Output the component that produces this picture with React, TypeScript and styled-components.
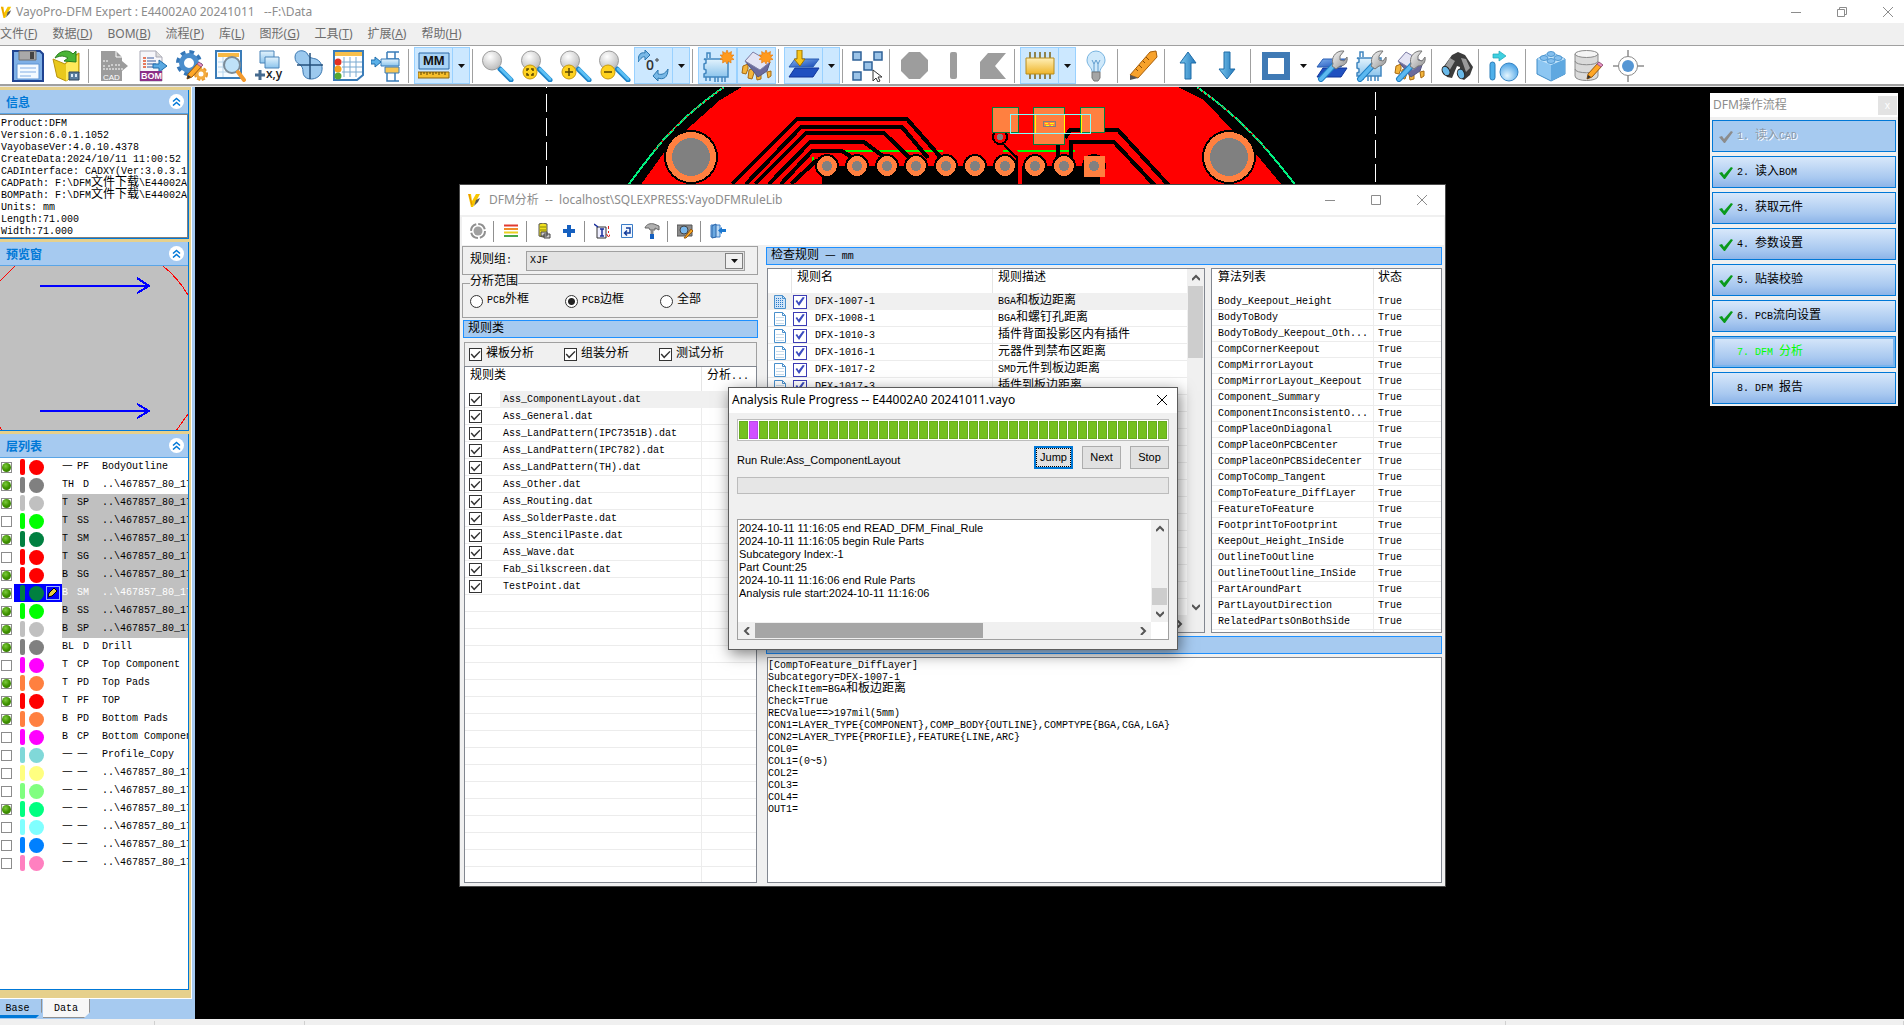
import React from "react";
import styled, { createGlobalStyle, css } from "styled-components";

const MONO = `"Liberation Mono", "Noto Sans CJK SC", monospace`;
const UI = `"Noto Sans", "Noto Sans CJK SC", sans-serif`;
const HAN = `"Noto Sans CJK SC", sans-serif`;

const Global = createGlobalStyle`
  *, *::before, *::after { box-sizing: border-box; }
  body { margin: 0; background: #000; font: 10px/12px ${MONO}; color: #000; overflow: hidden; }
  button, input, select, textarea { font: inherit; color: inherit; margin: 0; }
  svg { display: block; flex: none; }
`;

/* ---------- shared text helper: Chinese runs are set two sizes larger ---------- */
const Han = styled.span`
  font-family: ${HAN};
  font-size: 12px;
  line-height: 0;
`;
const T = ({ children }: { children: string }) => (
  <>
    {children.split(/([\u2014\u3000-\u9fff\uff00-\uffef]+)/).map((s, i) => (i % 2 ? <Han key={i}>{s}</Han> : s))}
  </>
);

/* ---------- application frame ---------- */
const App_ = styled.div`
  height: 100vh;
  display: flex;
  flex-direction: column;
  background: #f0f0f0;
`;
const TitleBar = styled.header`
  height: 23px;
  display: flex;
  align-items: center;
  background: #fff;
  font: 12px/22px ${UI};
  color: #8c8c8c;
  white-space: pre;
`;
const TitleLogo = styled.span`
  width: 16px;
`;
const WinButtons = styled.div<{ $gap: number; $end?: number }>`
  margin-left: auto;
  padding-right: ${(p) => p.$end ?? 0}px;
  display: flex;
  gap: ${(p) => p.$gap}px;
`;
const WinButton = styled.button`
  width: 14px;
  height: 14px;
  padding: 0;
  border: 0;
  background: none;
  color: inherit;
`;
const MenuBar = styled.nav`
  height: 22px;
  display: flex;
  gap: 15px;
  align-items: center;
`;
const MenuItem = styled.button`
  border: 0;
  padding: 0;
  background: none;
  font: 12px/18px ${UI};
  color: #6d6d6d;
`;
const ToolBar = styled.div`
  height: 42px;
  padding: 1px 0 0 8px;
  display: flex;
  align-items: flex-start;
  background: linear-gradient(#fff 0 38px, #a0a0a0 38px 40px, #e8e8e8 40px);
  border-top: 1px solid #a0a0a0;
`;
const ToolButton = styled.button<{ $on?: boolean; $narrow?: boolean }>`
  width: ${(p) => (p.$narrow ? 17 : 39)}px;
  height: 37px;
  padding: 0;
  display: flex;
  align-items: center;
  justify-content: center;
  border: 1px solid ${(p) => (p.$on ? "#99d1ff" : "transparent")};
  background: ${(p) => (p.$on ? "#cce8ff" : "none")};
  ${(p) => p.$narrow && p.$on && css`border-left: 0;`}
`;
const ToolSep = styled.span`
  width: 8px;
  height: 34px;
  margin-top: 2px;
  background: linear-gradient(90deg, transparent 2px, #a0a0a0 2px 3px, transparent 3px);
`;
const Main = styled.main`
  flex: 1;
  min-height: 0;
  display: flex;
`;
const StatusBar = styled.footer`
  height: 6px;
  display: flex;
  background: #f0f0f0;
`;
const StatusCell = styled.span<{ $w?: number }>`
  ${(p) => (p.$w ? `width: ${p.$w}px;` : "flex: 1;")}
  margin-top: 2px;
  border-right: 1px solid #d0d0d0;
`;

/* ---------- icons of the main tool bar ---------- */
const HiddenSvg = styled.svg`
  position: absolute;
`;
const Defs = () => (
  <HiddenSvg width="0" height="0" aria-hidden="true">
    <defs>
      <linearGradient id="blue" x1="0" y1="0" x2="0" y2="1"><stop offset="0" stopColor="#e3f3fd" /><stop offset="1" stopColor="#8cc4ec" /></linearGradient>
      <linearGradient id="deep" x1="0" y1="0" x2="1" y2="1"><stop offset="0" stopColor="#7fb2ee" /><stop offset="1" stopColor="#1446b4" /></linearGradient>
      <linearGradient id="arrow" x1="0" y1="0" x2="1" y2="0"><stop offset="0" stopColor="#7cc8ee" /><stop offset="1" stopColor="#2277bb" /></linearGradient>
      <linearGradient id="gold" x1="0" y1="0" x2="0" y2="1"><stop offset="0" stopColor="#fff0b8" /><stop offset="1" stopColor="#efb52a" /></linearGradient>
      <linearGradient id="steel" x1="0" y1="0" x2="1" y2="1"><stop offset="0" stopColor="#fafafa" /><stop offset="1" stopColor="#8d8d8d" /></linearGradient>
      <radialGradient id="lens" cx=".4" cy=".3" r=".8"><stop offset="0" stopColor="#fff" /><stop offset="1" stopColor="#b4b4b4" /></radialGradient>
      <radialGradient id="ball" cx=".4" cy=".7" r=".7"><stop offset="0" stopColor="#e4f6ff" /><stop offset="1" stopColor="#4aa3e6" /></radialGradient>
    </defs>
  </HiddenSvg>
);
const Ic = ({ children }: { children: React.ReactNode }) => (
  <svg width="32" height="32" viewBox="0 0 32 32" fill="none" aria-hidden="true">{children}</svg>
);
const Wrench = () => (
  <g>
    <path d="M5 29 L20 13" stroke="#1f7fc4" strokeWidth="6" strokeLinecap="round" />
    <path d="M5 29 L19 14" stroke="#5cb8f0" strokeWidth="4" strokeLinecap="round" />
    <path d="M17 14c-2-6 2-12 8-13h3l-4 5v4l4 1 3-4c1 5-2 9-7 9l-4 3-4-3z" fill="url(#steel)" stroke="#777" />
  </g>
);
const Sun = () => (
  <path d="M25 0l1.500 3.300L29.500 1.500 29 5l3 0-2.300 2.300L32 9.500l-3.200.3.300 3.200-2.800-1.700L25 14l-1.600-2.700L20.600 13l.2-3.200L18 9.400l2.300-2.200L18 5h3l-.4-3.500 2.900 1.800z" fill="#ff9a1e" stroke="#e87400" strokeWidth=".6" />
);
const Plates = () => (
  <g stroke="#10349a">
    <path d="M7 18h24l-6 9H1z" fill="#1f50c0" />
    <path d="M7 9h24l-6 8H1z" fill="url(#deep)" stroke="#2b5fb4" />
  </g>
);
const ChipBody = () => (
  <g stroke="#4287c0" strokeWidth="1.500">
    <path d="M5 7V2h3v5M4 26v4M13 26v5M20 26v5M8 26v4M16 26v5M23 26v5" />
    <path d="M2 8h24v18H2v-3l2-1v-3l-2-1v-5l2-1V9z" fill="url(#blue)" />
  </g>
);
const Chip3D = () => (
  <g>
    <path d="M2 16l5-2v5l-2 5-4-1zM8 20l5-2v5l-2 6-4-1zM15 24l5-1v6l-4 1z" fill="#f3b53c" stroke="#a86a10" />
    <path d="M4 11L12 3l17 9-3 9-9 6z" fill="#6a6a9c" stroke="#55557f" />
    <path d="M4 11L12 2l17 10-10 8z" fill="#e4e4f4" stroke="#8080a8" />
    <path d="M26 22l4-1v5l-3 2z" fill="#f3b53c" stroke="#a86a10" />
  </g>
);
const Glass = ({ badge }: { badge?: string }) => (
  <Ic>
    <path d="M18 19l11 11" stroke="#1c82c8" strokeWidth="5" strokeLinecap="round" />
    <path d="M19 19l10 10" stroke="#5cc0f5" strokeWidth="3" strokeLinecap="round" />
    <circle cx="10" cy="10.500" r="9.500" fill="url(#lens)" stroke="#9b9b9b" />
    {badge && <circle cx="9" cy="22" r="7" fill="#ffd21f" stroke="#c89a10" />}
    {badge && <path d={badge} stroke="#5a4500" strokeWidth="1.500" />}
  </Ic>
);
const Pencil = ({ x = 0, y = 0 }: { x?: number; y?: number }) => (
  <g transform={`translate(${x} ${y})`}>
    <path d="M1 17l1-5L12 1l4 3L6 15z" fill="#ffa726" stroke="#9a5a10" />
    <path d="M11 2l2-2 4 3-2 2z" fill="#e68fc0" stroke="#9a5a80" />
    <path d="M1 17l1-4 3 2z" fill="#333" />
  </g>
);

const icons: Record<string, React.ReactNode> = {
  save: <Ic><path d="M2 1h26l3 3v27H1V1z" fill="#7fb0e6" stroke="#1f4391" strokeWidth="2" /><path d="M7 1h17v9H7z" fill="#a9a9a9" stroke="#6f6f6f" /><path d="M18 2h4v7h-4z" fill="#444" /><path d="M5 14h22v15H5z" fill="#f4faff" stroke="#5f94d4" /><path d="M8 18h16M8 22h16M8 26h11" stroke="#a8c8ee" strokeWidth="1.500" /></Ic>,
  open: <Ic><path d="M2 9l12 5 4-5 10-6v20l-13 8L6 27z" fill="#e9c81c" stroke="#b8930c" /><path d="M15 14l12-9v18l-12 8z" fill="#ffe95a" /><path d="M4 8C8 0 18-1 22 4l3-3v11l-12-1 4-3c-5-3-9-2-13 0z" fill="#4ab436" stroke="#2a7d1c" /><path d="M18 22h10v8H18z" fill="#5b7f9f" stroke="#2d455c" /><path d="M20 24h2v3h-2zM24 24h2v3h-2z" fill="#dcebf8" /></Ic>,
  cad: <Ic><path d="M3 1h15l6 6v4l6 5-6 5v10H3z" fill="#9c9c9c" /><path d="M18 1v6h6" stroke="#fff" /><path d="M5 16h3M10 16h2M14 14v3M17 15h5M5 19h20M5 11h6" stroke="#fff" strokeDasharray="2 1" /><text x="5" y="30" fontSize="8" fontFamily="Liberation Sans" fill="#fff">CAD</text></Ic>,
  bom: <Ic><path d="M3 1h16l6 6v24H3z" fill="#f6f6fa" stroke="#a9a9b5" /><path d="M19 1v6h6" stroke="#a9a9b5" fill="#ddd" /><path d="M6 8h3M6 11h3M6 14h3M6 17h3" stroke="#e0522c" strokeWidth="1.500" /><path d="M10 8h7M10 11h9M10 14h9M10 17h6" stroke="#3b5a9c" /><path d="M16 14h6v-4l8 6-8 6v-4h-6z" fill="#5aa9e2" stroke="#1e6dab" /><path d="M3 21h22v10H3z" fill="#8c2f87" /><text x="4" y="29" fontSize="9" fontWeight="700" fontFamily="Liberation Sans" fill="#fff">BOM</text></Ic>,
  gears: <Ic><circle cx="13" cy="13" r="10.500" stroke="#3577b8" strokeWidth="5" strokeDasharray="4.500 3.750" /><circle cx="13" cy="13" r="7.500" stroke="#4a8dcc" strokeWidth="5" /><circle cx="25" cy="24" r="5.500" stroke="#e8962a" strokeWidth="3" strokeDasharray="3 1.600" /><circle cx="25" cy="24" r="4" stroke="#f4ab3e" strokeWidth="3" /><Pencil x={10} y={12} /></Ic>,
  find: <Ic><path d="M1 1h25v27H1z" fill="#f5fbff" stroke="#3a7cb8" strokeWidth="2" /><path d="M3 3h21v4H3z" fill="#f7b944" /><path d="M3 12h21M3 17h21M3 22h21M8 7v20" stroke="#b7d5ec" /><circle cx="17" cy="15" r="8" fill="#bfe2f8" stroke="#7b8c99" strokeWidth="2" /><path d="M23 22l6 8" stroke="#f39a2d" strokeWidth="4" strokeLinecap="round" /></Ic>,
  xy: <Ic><path d="M6 1h14v12H6z" fill="url(#blue)" stroke="#4a84b8" /><path d="M11 7h14v11H11z" fill="url(#blue)" stroke="#4a84b8" /><path d="M6 20v10M1 25h10" stroke="#456a8e" strokeWidth="3" /><text x="12" y="28" fontSize="12" fontWeight="600" fontFamily="Open Sans" fill="#222">x,y</text></Ic>,
  shape: <Ic><path d="M2 7c0-8 11-8 13-2 1 3 4 3 8 4 7 3 8 12 3 17s-16 4-16-4c0-4-1-6-4-8-2-1-4-3-4-7z" fill="#9cc9ee" stroke="#3c78b0" /><path d="M17 3v26M4 15h26" stroke="#24507c" strokeWidth="1.500" /></Ic>,
  sheet: <Ic><path d="M2 1h29v24l-6 5H2z" fill="#fff" stroke="#3a7cb8" strokeWidth="2" /><path d="M3 2h27v4H3z" fill="#f7c04c" /><path d="M10 12h20M10 17h20M10 22h20M12 7v20M18 7v20M24 7v20" stroke="#7aaad0" /><circle cx="6" cy="12" r="3.500" fill="#e33022" /><circle cx="6" cy="19" r="3.500" fill="#f5a11c" /><circle cx="6" cy="26" r="3.500" fill="#55a832" /></Ic>,
  insert: <Ic><path d="M16 2h12M16 2v7h12M24 2v7M16 23v8h12M24 23v8" stroke="#3a7cb8" strokeWidth="1.500" /><path d="M10 9h18v7H10z" fill="url(#blue)" stroke="#3a7cb8" /><path d="M14 17h14v6H14z" fill="#f9c653" stroke="#3a7cb8" /><path d="M0 10h4V7l6 5-6 5v-3H0z" fill="#5ab0e8" stroke="#1e6dab" /></Ic>,
  mm: <Ic><path d="M1 3h30v16H1z" fill="#a9d3f5" stroke="#2d6aa8" /><text x="5" y="15" fontSize="13" fontWeight="700" fontFamily="Liberation Sans" fill="#111">MM</text><path d="M0 22h31v6H0z" fill="#f6bf2c" stroke="#8a6410" /><path d="M3 22v3M6 22v2M9 22v3M12 22v2M15 22v3M18 22v2M21 22v3M24 22v2M27 22v3" stroke="#5a4300" /></Ic>,
  zoom: <Glass />,
  zoomFit: <Glass badge="M6 21v-2h2M10 19h2v2M12 23v2h-2M8 25H6v-2" />,
  zoomIn: <Glass badge="M9 18v8M5 22h8" />,
  zoomOut: <Glass badge="M5 22h8" />,
  rotate: <Ic><path d="M0 12C0 4 3 2 7 3V0l5 5-5 5V7C5 6 3 8 0 12z" fill="#78b8e6" stroke="#2a76ae" /><path d="M30 19c0 9-5 11-10 9v3l-5-5 5-6v4c4 1 7 0 10-5z" fill="#78b8e6" stroke="#2a76ae" /><text x="8" y="20" fontSize="14" fontWeight="600" fontFamily="Open Sans" fill="#333">0</text><circle cx="19" cy="10" r="1.200" stroke="#333" /></Ic>,
  chipNew: <Ic><g transform="translate(0 1)"><ChipBody /></g><Sun /></Ic>,
  chip3dNew: <Ic><Chip3D /><Sun /></Ic>,
  layer: <Ic><Plates /><path d="M9 0h5v9h3l-5 7-6-7h3z" fill="#f8c61a" stroke="#9c7400" /></Ic>,
  select: <Ic><g fill="#9cc4e8" stroke="#2f6298" strokeWidth="1.500"><path d="M1 2h8v8H1zM22 2h8v8h-8zM12 12h8v8h-8zM1 22h8v8H1z" /></g><path d="M21 20v11l3-3 2 4 2-1-2-4h4z" fill="#fff" stroke="#333" /></Ic>,
  octagon: <svg width="27" height="27" viewBox="0 0 27 27"><path d="M8 0h11l8 8v11l-8 8H8l-8-8V8z" fill="#9d9d9d" /></svg>,
  pin: <svg width="8" height="27" viewBox="0 0 8 27"><rect width="7" height="27" rx="2" fill="#9d9d9d" /></svg>,
  flag: <svg width="26" height="26" viewBox="0 0 26 26"><path d="M8 0h18L15 13l11 13H0V9z" fill="#9d9d9d" /></svg>,
  chipGold: <Ic><path d="M6 2v27M11 2v27M16 2v27M21 2v27M26 2v27" stroke="#7a6214" strokeWidth="1.500" /><path d="M2 8h28v16H2z" fill="url(#gold)" stroke="#b88c1c" /></Ic>,
  bulb: <Ic><path d="M12 22c0-5-5-6-5-12a9 9 0 0118 0c0 6-5 7-5 12z" fill="#cfe9fb" stroke="#78b4e0" /><path d="M12 10l2 4 2-4 2 4 2-4M14 14v8M18 14v8" stroke="#5f9cce" /><path d="M12 22h8v6l-2 3h-4l-2-3z" fill="#a5a5a5" stroke="#777" /></Ic>,
  ruler: <Ic><path d="M3 25L23 2l6-1 1 6L11 28z" fill="#f7a22c" stroke="#a85e08" /><path d="M3 25l8 3-8 2z" fill="#555" /><path d="M9 19l2 2M12 15l3 3M16 11l2 2M19 7l3 3" stroke="#8a4c05" /></Ic>,
  up: <Ic><path d="M11 29V13H6l8-11 8 11h-5v16z" fill="url(#arrow)" stroke="#1f6ca8" /></Ic>,
  down: <Ic><path d="M11 2v17H6l8 10 8-10h-5V2z" fill="url(#arrow)" stroke="#1f6ca8" /></Ic>,
  square: <svg width="28" height="28" viewBox="0 0 28 28"><rect x="3" y="3" width="22" height="22" fill="none" stroke="#3f7ab5" strokeWidth="6" /></svg>,
  layerSet: <Ic><Plates /><Wrench /></Ic>,
  chipSet: <Ic><ChipBody /><Wrench /></Ic>,
  chip3dSet: <Ic><Chip3D /><Wrench /></Ic>,
  binoculars: <Ic><path d="M1 19l10-14 6-3 7 3 8 12-3 8-6 5-5-3 1-10-3-1-5 12-5-1z" fill="#3c3c3c" /><path d="M9 8l5 3-7 12-4-5zM20 8l5 1 4 9-4 4z" fill="#9a9a9a" /><ellipse cx="5" cy="21" rx="3.500" ry="5" transform="rotate(-30 5 21)" fill="#68b8e8" stroke="#222" /><ellipse cx="20" cy="24" rx="3.500" ry="5" transform="rotate(-20 20 24)" fill="#68b8e8" stroke="#222" /></Ic>,
  convert: <Ic><rect x="2" y="12" width="5" height="18" rx="2.500" fill="#4fb0ea" stroke="#2a7cb8" /><circle cx="21" cy="22" r="9" fill="url(#ball)" stroke="#3484c4" /><path d="M5 4h6V1l7 5-7 5V8H5z" fill="#3fd0e0" stroke="#1ea3b4" strokeWidth=".7" /></Ic>,
  brick: <Ic><path d="M16 2l14 7v15l-14 7L2 24V9z" fill="#8cc6f2" stroke="#3f8cc8" /><path d="M16 15l14-6v15l-14 7z" fill="#5fa8e0" /><path d="M2 9l14-7 14 7-14 6z" fill="#c4e4fa" /><g fill="#84bfee" stroke="#3f8cc8" strokeWidth=".8"><ellipse cx="16" cy="4" rx="4" ry="2.500" /><ellipse cx="9" cy="8" rx="4" ry="2.500" /><ellipse cx="23" cy="8" rx="4" ry="2.500" /><ellipse cx="16" cy="11" rx="4" ry="2.500" /></g></Ic>,
  database: <Ic><path d="M1 4v22c0 6 23 6 23 0V4z" fill="#dadada" stroke="#8a8a8a" /><ellipse cx="12.500" cy="4" rx="11.500" ry="3.500" fill="#f4f4f4" stroke="#8a8a8a" /><path d="M1 11c0 5 23 5 23 0M1 19c0 5 23 5 23 0" stroke="#8a8a8a" /><Pencil x={12} y={12} /></Ic>,
  target: <Ic><path d="M15 0v32M0 16h31" stroke="#555" /><circle cx="15" cy="16" r="9.500" fill="#fff" stroke="#8a8a8a" /><circle cx="15" cy="16" r="6" fill="#5596d4" /></Ic>,
};
const Caret = () => <svg width="7" height="4" viewBox="0 0 7 4"><path d="M0 0h7L3.500 4z" fill="#111" /></svg>;

/* a trailing "*" marks a pressed button, "v" a drop-down part, "|" a separator */
const toolItems =
  "save open | cad bom gears find xy shape sheet insert | mm* v* | zoom zoomFit zoomIn zoomOut rotate* v* | chipNew* chip3dNew* | layer* v* | select | octagon pin flag | chipGold* v* bulb | ruler | up down | square v layerSet chipSet chip3dSet | binoculars | convert | brick database target".split(" ");

const menus: [string, string][] = [["文件", "F"], ["数据", "D"], ["BOM", "B"], ["流程", "P"], ["库", "L"], ["图形", "G"], ["工具", "T"], ["扩展", "A"], ["帮助", "H"]];

const Logo = ({ size = 14 }: { size?: number }) => (
  <svg width={size} height={size} viewBox="0 0 14 14" aria-hidden="true">
    <path d="M1 1l3 0 1 7 4-7 4 0-7 13H4z" fill="#f7c600" />
    <path d="M9 7l4-2-2 4-4 4z" fill="#555" />
    <path d="M2 1l3 11" stroke="#e88a00" />
  </svg>
);
const MinIcon = () => <svg width="14" height="14" viewBox="0 0 14 14"><path d="M2 7.500h10" stroke="currentColor" /></svg>;
const MaxIcon = () => <svg width="14" height="14" viewBox="0 0 14 14"><path d="M2.500 2.500h9v9h-9z" stroke="currentColor" fill="none" /></svg>;
const RestoreIcon = () => <svg width="14" height="14" viewBox="0 0 14 14"><path d="M2.500 4.500h7v7h-7zM4.500 4.500v-2h7v7h-2" stroke="currentColor" fill="none" /></svg>;
const CloseIcon = () => <svg width="14" height="14" viewBox="0 0 14 14"><path d="M2 2l10 10M12 2L2 12" stroke="currentColor" /></svg>;

/* ---------- side bar ---------- */
const SideBar = styled.aside`
  width: 195px;
  display: flex;
  flex-direction: column;
  background: #a6caf0;
`;
const SideFrame = styled.div`
  flex: 1;
  min-height: 0;
  width: 192px;
  padding: 3px 2px 8px 0;
  display: flex;
  flex-direction: column;
  gap: 3px;
  background: #e6d08c;
  border-right: 1px solid #fff;
  border-bottom: 1px solid #fff;
`;
const Panel = styled.section<{ $grow?: boolean }>`
  display: flex;
  flex-direction: column;
  min-height: 0;
  ${(p) => p.$grow && "flex: 1;"}
  border-right: 1px solid #0078d7;
  border-bottom: 1px solid #0078d7;
`;
const PanelHead = styled.div`
  height: 24px;
  padding: 0 4px 0 6px;
  display: flex;
  align-items: center;
  justify-content: space-between;
  background: #a6caf0;
  border-bottom: 1px solid #5aa5e6;
  font: 700 12px/22px ${HAN};
  color: #0078d7;
`;
const Collapse = styled.button`
  width: 15px;
  height: 15px;
  padding: 0;
  border: 0;
  border-radius: 50%;
  background: #fff;
  display: grid;
  place-items: center;
`;
const Info = styled.pre`
  margin: 0;
  height: 124px;
  padding: 3px 2px 0 1px;
  overflow: hidden;
  background: #fff;
  border: 1px solid #808080;
  border-left: 0;
  font: 10px/12px ${MONO};
`;
const InfoLine = styled.div`
  height: 12px;
`;
const Preview = styled.div`
  height: 164px;
  overflow: hidden;
  background: #c0c0c0;
`;
const Layers = styled.ul`
  margin: 0;
  padding: 0;
  flex: 1;
  overflow: hidden;
  list-style: none;
  background: #fff;
`;
const LayerRow = styled.li`
  height: 18px;
  display: flex;
  align-items: center;
`;
const LayerSwatch = styled.span<{ $on?: boolean }>`
  width: 48px;
  height: 18px;
  padding-left: 6px;
  margin-left: 2px;
  display: flex;
  align-items: center;
  gap: 4px;
  background: ${(p) => (p.$on ? "#00f" : "none")};
`;
const Bar = styled.span<{ $c: string }>`
  width: 5px;
  height: 16px;
  border-radius: 2px;
  background: ${(p) => p.$c};
`;
const Dot = styled.span<{ $c: string }>`
  width: 15px;
  height: 15px;
  border-radius: 50%;
  background: ${(p) => p.$c};
`;
const PenBox = styled.span`
  width: 14px;
  height: 14px;
  margin-left: -2px;
  border: 1px solid #9ab4ff;
  display: grid;
  place-items: center;
`;
const LayerText = styled.label<{ $tone?: string }>`
  flex: 1;
  height: 18px;
  min-width: 0;
  overflow: hidden;
  display: grid;
  grid-template-columns: 15px 25px 1fr;
  white-space: pre;
  line-height: 17px;
  background: ${(p) => (p.$tone ? "#c0c0c0" : "none")};
  color: ${(p) => (p.$tone === "sel" ? "#fff" : "#000")};
`;
const VisBox = styled.input`
  appearance: none;
  width: 11px;
  height: 11px;
  margin-left: 1px;
  background: #fff;
  border: 1px solid #8c8c8c;
  &:checked::before {
    content: "";
    display: block;
    width: 9px;
    height: 9px;
    border-radius: 50%;
    background: radial-gradient(circle at 40% 35%, #7ccb3c, #3f9200 50%, #2c6b00);
  }
`;
const Tabs = styled.div`
  height: 20px;
  display: flex;
`;
const Tab = styled.button<{ $on?: boolean }>`
  width: ${(p) => (p.$on ? 47 : 42)}px;
  height: 19px;
  padding: ${(p) => (p.$on ? "2px 0 0" : "4px 6px 0 0")};
  margin-right: 1px;
  border: 0;
  border-right: 1px solid #909090;
  border-bottom: ${(p) => (p.$on ? "1px solid #909090" : "3px solid #0078d7")};
  background: ${(p) => (p.$on ? "#f7f7f7" : "#a6caf0")};
  clip-path: polygon(0 0, 100% 0, 100% 70%, calc(100% - 6px) 100%, 0 100%);
  font: 10px/12px ${MONO};
`;

const info = ["Product:DFM", "Version:6.0.1.1052", "VayobaseVer:4.0.10.4378", "CreateData:2024/10/11 11:00:52", "CADInterface: CADXY(Ver:3.0.3.11", "CADPath: F:\\DFM文件下载\\E44002A0", "BOMPath: F:\\DFM文件下载\\E44002A0", "Units: mm", "Length:71.000", "Width:71.000"];

const PATH = "..\\467857_80_17";
const layers: [number, string, string, string, string, string?][] = [
  [1, "#ff0000", "—", "PF", "BodyOutline"],
  [1, "#808080", "TH", " D", PATH],
  [1, "#c0c0c0", "T", "SP", PATH, "g"],
  [0, "#00ff00", "T", "SS", PATH, "g"],
  [1, "#008040", "T", "SM", PATH, "g"],
  [0, "#ff0000", "T", "SG", PATH, "g"],
  [1, "#ff0000", "B", "SG", PATH, "g"],
  [1, "#008040", "B", "SM", PATH, "sel"],
  [1, "#00ff00", "B", "SS", PATH, "g"],
  [1, "#c0c0c0", "B", "SP", PATH, "g"],
  [1, "#808080", "BL", " D", "Drill"],
  [0, "#ff00ff", "T", "CP", "Top Component"],
  [1, "#ff8040", "T", "PD", "Top Pads"],
  [1, "#ff0000", "T", "PF", "TOP"],
  [1, "#ff8040", "B", "PD", "Bottom Pads"],
  [0, "#ff00ff", "B", "CP", "Bottom Component"],
  [0, "#80d8d8", "—", "—", "Profile_Copy"],
  [0, "#ffff80", "—", "—", PATH],
  [0, "#80ff80", "—", "—", PATH],
  [1, "#00ff80", "—", "—", PATH],
  [0, "#80ffff", "—", "—", PATH],
  [0, "#0080ff", "—", "—", PATH],
  [0, "#ff80c0", "—", "—", PATH],
];

const Head = ({ children }: { children: string }) => (
  <PanelHead>
    {children}
    <Collapse aria-label={`收起${children}`}>
      <svg width="9" height="9" viewBox="0 0 9 9" fill="none" stroke="#0078d7" strokeWidth="1.500"><path d="M1 4.500l3.500-3 3.500 3M1 8.500l3.500-3 3.500 3" /></svg>
    </Collapse>
  </PanelHead>
);

/* ---------- board canvas ---------- */
const Canvas = styled.div`
  flex: 1;
  position: relative;
  overflow: hidden;
  background: #000;
`;
const BoardSvg = styled.svg`
  position: absolute;
  left: 345px;
  top: 0;
`;
const padX = [827, 857, 887, 916, 946, 975, 1005, 1035, 1064];
const Board = () => (
  <BoardSvg width="860" height="110" viewBox="540 87 860 110" fill="none" shapeRendering="crispEdges">
    <path d="M742 87H1178L1204 100L1234 132L1256 154L1286 190V197H632L663 154L684 132L720 100Z" fill="#f00" />
    <path d="M546.500 94V197" stroke="#fff" strokeDasharray="18 6" />
    <path d="M1375.500 92V197" stroke="#fff" strokeDasharray="18 6" />
    <path d="M546.500 87v1" stroke="#fff" />
    <path d="M724 87Q680 118 655 150T620 197M1197 87Q1240 118 1267 150T1304 197" stroke="#00f080" strokeWidth="2" />
    <path d="M723 88Q679 119 654 151M1198 88Q1241 119 1268 151" stroke="#d03020" strokeDasharray="2 3" />
    {[691, 1229].map((x) => (
      <g key={x}>
        <circle cx={x} cy="157" r="27" fill="#000" />
        <circle cx={x} cy="157" r="25" fill="#ff8040" />
        <circle cx={x} cy="157" r="19" fill="#808080" />
      </g>
    ))}
    <path d="M842 151h101M1003 151h72M812.500 157v8" stroke="#0f0" strokeWidth="2" />
    <g stroke="#000" strokeWidth="4">
      <path d="M732 184L797 119H907L943 160" />
      <path d="M746 184L801 127H902L928 158" />
      <path d="M755 184L806 133H884L914 162" />
      <path d="M769 184L810 142H864L888 160" />
      <path d="M781 184L812 151H842L856 160" />
      <path d="M791 184L817 160" />
      <path d="M1058 145v14M1071 160V142H1114L1159 190" />
      <path d="M1065 138L1070 130H1118L1173 190" />
      <path d="M1003 142L1018 158V184" />
    </g>
    <path d="M822 166H1100V197H822Z" fill="#000" />
    {[...padX, 1094].map((x) => <circle key={x} cx={x} cy="166" r="12" fill="#000" />)}
    {padX.map((x) => (
      <g key={x}>
        <circle cx={x} cy="166" r="10" fill="#ff8040" />
        <circle cx={x} cy="166" r="5" fill="#808080" />
      </g>
    ))}
    <path d="M1084 156h21v21h-21z" fill="#ff8040" />
    <circle cx="1094" cy="166" r="5" fill="#808080" />
    <path d="M1003 140L1020 156V197" stroke="#f00" strokeWidth="4" />
    <circle cx="1000" cy="137" r="8" fill="#000" />
    <circle cx="1000" cy="137" r="6" fill="#f00" />
    <circle cx="1000" cy="137" r="3" fill="#808080" />
    <g fill="#ff8040" stroke="#008040">
      <path d="M992.500 107.500h26v25h-26zM1033.500 107.500h31v37h-31zM1080.500 107.500h24v25h-24z" />
    </g>
    <path d="M1035.500 114v19M1064.500 114v19M1081.500 114v19" stroke="#ff0" />
    <path d="M1010.500 114.500h80v19h-80z" stroke="#80ffff" />
    <path d="M1043.500 121.500h12v5h-12z" stroke="#808080" />
    <path d="M1045 123h3M1050 123h4M1046 125h3M1051 125h2" stroke="#ff0" />
  </BoardSvg>
);

/* ---------- process palette ---------- */
const Palette = styled.section`
  position: absolute;
  right: 6px;
  top: 6px;
  width: 188px;
  padding: 0 2px 2px;
  background: #f0f0f0;
`;
const PaletteHead = styled.div`
  height: 24px;
  margin: 0 -2px 3px;
  padding: 0 1px 0 3px;
  display: flex;
  align-items: center;
  justify-content: space-between;
  background: #fff;
  font: 12px/22px ${UI};
  color: #8c8c8c;
`;
const PaletteClose = styled.button`
  width: 19px;
  height: 19px;
  padding: 0;
  border: 0;
  background: #e3e3e3;
  color: #fff;
  font: 10px/16px ${UI};
`;
const Steps = styled.div`
  display: flex;
  flex-direction: column;
  gap: 4px;
`;
const Step = styled.button<{ $state?: string }>`
  height: 32px;
  padding: 2px 0 0 6px;
  display: flex;
  align-items: center;
  gap: 4px;
  white-space: pre;
  border: 1px solid #0078d7;
  background: linear-gradient(#d8e8fa, #a8c8f0 70%, #8cb4e8);
  ${(p) => p.$state === "off" && css`background: #a6caf0; color: #8c98a8; text-shadow: 1px 1px #fff;`}
  ${(p) => p.$state === "on" && css`color: #0f0; box-shadow: inset 0 0 0 2px #78b4ee;`}
`;
const StepMark = styled.span`
  width: 14px;
`;
const steps: [string, string?][] = [["1. 读入CAD", "off"], ["2. 读入BOM"], ["3. 获取元件"], ["4. 参数设置"], ["5. 贴装校验"], ["6. PCB流向设置"], ["7. DFM 分析", "on"], ["8. DFM 报告"]];

/* ---------- rule dialog ---------- */
const Dialog = styled.section`
  position: absolute;
  left: 264px;
  top: 97px;
  width: 987px;
  height: 703px;
  display: flex;
  flex-direction: column;
  background: #f0f0f0;
  border: 1px solid #4a4a4a;
`;
const DialogTitle = styled.div`
  height: 30px;
  padding: 0 16px 0 7px;
  display: flex;
  align-items: center;
  gap: 8px;
  background: #fff;
  font: 12px/28px ${UI};
  color: #8c8c8c;
  white-space: pre;
`;
const DialogTools = styled.div`
  height: 28px;
  margin: 2px 1px 1px 2px;
  padding-left: 3px;
  display: flex;
  align-items: center;
  background: #fff;
`;
const SmallButton = styled.button`
  width: 25px;
  height: 24px;
  padding: 0;
  border: 0;
  background: none;
  display: grid;
  place-items: center;
`;
const SmallSep = styled.span`
  width: 8px;
  height: 21px;
  background: linear-gradient(90deg, transparent 3px, #909090 3px 4px, transparent 4px);
`;
const DialogBody = styled.div`
  flex: 1;
  min-height: 0;
  padding: 0 3px 3px 2px;
  display: flex;
  gap: 8px;
`;
const LeftCol = styled.div`
  width: 296px;
  display: flex;
  flex-direction: column;
`;
const RightCol = styled.div`
  flex: 1;
  min-width: 0;
  padding-top: 1px;
  display: flex;
  flex-direction: column;
  gap: 3px;
`;
const GroupRow = styled.div`
  height: 29px;
  padding: 0 12px 0 7px;
  display: flex;
  align-items: center;
  border: 1px solid #a0a0a0;
`;
const GroupLabel = styled.label`
  width: 56px;
  line-height: 14px;
`;
const Combo = styled.div`
  position: relative;
  flex: 1;
  display: flex;
`;
const ComboSelect = styled.select`
  appearance: none;
  flex: 1;
  height: 20px;
  padding: 0 3px;
  border: 1px solid #a0a0a0;
  border-radius: 0;
  background: #e3e3e3;
`;
const ComboArrow = styled.span`
  position: absolute;
  right: 2px;
  top: 2px;
  width: 18px;
  height: 16px;
  border: 1px solid #808080;
  background: #f0f0f0;
  display: grid;
  place-items: center;
  pointer-events: none;
`;
const Scope = styled.fieldset`
  height: 43px;
  margin: 0;
  padding: 3px 0 0 7px;
  min-width: 0;
  display: flex;
  border: 1px solid #a0a0a0;
`;
const Legend = styled.legend`
  padding: 0;
  line-height: 16px;
`;
const Option = styled.label`
  width: 95px;
  line-height: 14px;
  display: flex;
  align-items: center;
  gap: 4px;
`;
const Radio = styled.input`
  appearance: none;
  width: 13px;
  height: 13px;
  border: 1px solid #333;
  border-radius: 50%;
  background: #fff;
  &:checked { background: radial-gradient(circle, #222 0 3px, #fff 4px); }
`;
const Check = styled.input<{ $blue?: boolean }>`
  appearance: none;
  flex: none;
  display: block;
  width: ${(p) => (p.$blue ? 14 : 13)}px;
  height: ${(p) => (p.$blue ? 14 : 13)}px;
  border: 1px solid ${(p) => (p.$blue ? "#3c3cb4" : "#333")};
  background: #fff;
  &:checked::before {
    content: "";
    display: block;
    width: 11px;
    height: 11px;
    background: ${(p) => (p.$blue ? "#3c4cc0" : "#333")};
    clip-path: ${(p) => (p.$blue ? "polygon(14% 50%, 28% 42%, 42% 64%, 80% 14%, 98% 18%, 46% 96%)" : "polygon(6% 50%, 16% 42%, 38% 66%, 86% 18%, 96% 26%, 38% 86%)")};
  }
`;
const Band = styled.div<{ $left?: boolean }>`
  height: 18px;
  padding: 0 4px;
  line-height: 17px;
  border: 1px solid #1e90ff;
  background: #a6caf0;
  ${(p) => p.$left && "margin: 2px 0 4px 1px;"}
`;
const CheckRow = styled.div`
  height: 24px;
  margin: 0 1px 0 2px;
  padding-left: 4px;
  display: flex;
  align-items: center;
  border: 1px solid #a0a0a0;
  border-bottom: 0;
`;
const Grid = styled.div<{ $row: number; $head: number; $split: number }>`
  overflow: hidden;
  border: 1px solid #828790;
  background:
    linear-gradient(#fff, #fff) 0 0 / 100% ${(p) => p.$head}px no-repeat,
    linear-gradient(90deg, transparent ${(p) => p.$split}px, #ececec ${(p) => p.$split}px ${(p) => p.$split + 1}px, transparent ${(p) => p.$split + 1}px),
    repeating-linear-gradient(#fff 0 ${(p) => p.$row - 1}px, #ececec ${(p) => p.$row - 1}px ${(p) => p.$row}px) 0 ${(p) => p.$head}px;
`;
const ClassGrid = styled(Grid)`
  flex: 1;
  margin: 0 1px 0 2px;
`;
const Table = styled.table<{ $row: number; $head: number }>`
  width: 100%;
  table-layout: fixed;
  border-collapse: separate;
  border-spacing: 0;
  white-space: nowrap;
  th, td { padding: 0; text-align: left; font-weight: 400; overflow: hidden; text-overflow: clip; }
  th { height: ${(p) => p.$head}px; line-height: 20px; vertical-align: top; }
  th:not(:last-child) { border-right: 1px solid #e5e5e5; }
  td { height: ${(p) => p.$row}px; line-height: ${(p) => p.$row}px; }
`;
const Row = styled.tr<{ $on?: boolean }>`
  td { ${(p) => p.$on && "background: #f0f0f0;"} }
`;
const TintCell = styled.td<{ $on?: boolean }>`
  background: ${(p) => (p.$on ? "#f0f0f0" : "none")};
`;
const ClassCell = styled.div`
  height: 16px;
  padding-left: 4px;
  display: flex;
  align-items: center;
  gap: 18px;
`;
const ClassName = styled.label<{ $on?: boolean }>`
  flex: 1;
  padding-left: 3px;
  background: ${(p) => (p.$on ? "#f0f0f0" : "none")};
`;
const RuleCell = styled.div`
  height: 16px;
  padding-left: 1px;
  display: flex;
  align-items: center;
  gap: 8px;
`;
const Pad = styled.div<{ $l: number }>`
  padding-left: ${(p) => p.$l}px;
`;
const Lists = styled.div`
  height: 365px;
  padding-left: 1px;
  display: flex;
  gap: 6px;
`;
const RuleBox = styled(Grid)`
  width: 438px;
  display: grid;
  grid-template-columns: 1fr 17px;
  grid-template-rows: 1fr 17px;
`;
const Clip = styled.div`
  min-width: 0;
  min-height: 0;
  overflow: hidden;
`;
const AlgBox = styled(Grid)`
  flex: 1;
`;
const VScroll = styled.div`
  display: flex;
  flex-direction: column;
  align-items: center;
  background: #f0f0f0;
  color: #555;
`;
const HScroll = styled.div`
  display: flex;
  align-items: center;
  background: #f0f0f0;
  color: #555;
`;
const Thumb = styled.span<{ $w?: number; $h?: number; $dark?: boolean }>`
  width: ${(p) => p.$w ?? 15}px;
  height: ${(p) => p.$h ?? 15}px;
  background: ${(p) => (p.$dark ? "#a6a6a6" : "#cdcdcd")};
`;
const Grow = styled.span`
  flex: 1;
`;
const ArrowBox = styled.span`
  width: 17px;
  height: 17px;
  display: grid;
  place-items: center;
`;
const arrows = { up: "M0 6l4-4 4 4", down: "M0 2l4 4 4-4", left: "M6 0L2 4l4 4", right: "M2 0l4 4-4 4" };
const Arrow = ({ d }: { d: keyof typeof arrows }) => (
  <ArrowBox><svg width="8" height="8" viewBox="0 0 8 8" fill="none" stroke="currentColor" strokeWidth="2"><path d={arrows[d]} /></svg></ArrowBox>
);
const RuleText = styled.pre`
  flex: 1;
  margin: 0 0 0 1px;
  padding: 2px 0 0;
  overflow: hidden;
  border: 1px solid #828790;
  background: #fff;
  font: 10px/12px ${MONO};
`;
const Center = styled.div`
  display: flex;
  align-items: center;
  padding-left: 6px;
`;

const classes = ["Ass_ComponentLayout.dat", "Ass_General.dat", "Ass_LandPattern(IPC7351B).dat", "Ass_LandPattern(IPC782).dat", "Ass_LandPattern(TH).dat", "Ass_Other.dat", "Ass_Routing.dat", "Ass_SolderPaste.dat", "Ass_StencilPaste.dat", "Ass_Wave.dat", "Fab_Silkscreen.dat", "TestPoint.dat"];
const rules = [["DFX-1007-1", "BGA和板边距离"], ["DFX-1008-1", "BGA和螺钉孔距离"], ["DFX-1010-3", "插件背面投影区内有插件"], ["DFX-1016-1", "元器件到禁布区距离"], ["DFX-1017-2", "SMD元件到板边距离"], ["DFX-1017-3", "插件到板边距离"]];
const algs = ["Body_Keepout_Height", "BodyToBody", "BodyToBody_Keepout_Oth...", "CompCornerKeepout", "CompMirrorLayout", "CompMirrorLayout_Keepout", "Component_Summary", "ComponentInconsistentO...", "CompPlaceOnDiagonal", "CompPlaceOnPCBCenter", "CompPlaceOnPCBSideCenter", "CompToComp_Tangent", "CompToFeature_DiffLayer", "FeatureToFeature", "FootprintToFootprint", "KeepOut_Height_InSide", "OutlineToOutline", "OutlineToOutline_InSide", "PartAroundPart", "PartLayoutDirection", "RelatedPartsOnBothSide"];
const ruleText = "[CompToFeature_DiffLayer]\nSubcategory=DFX-1007-1\nCheckItem=BGA和板边距离\nCheck=True\nRECValue==>197mil(5mm)\nCON1=LAYER_TYPE{COMPONENT},COMP_BODY{OUTLINE},COMPTYPE{BGA,CGA,LGA}\nCON2=LAYER_TYPE{PROFILE},FEATURE{LINE,ARC}\nCOL0=\nCOL1=(0~5)\nCOL2=\nCOL3=\nCOL4=\nOUT1=";

const S = ({ children }: { children: React.ReactNode }) => <svg width="16" height="16" viewBox="0 0 16 16" fill="none" aria-hidden="true">{children}</svg>;
const smallIcons: (React.ReactNode | null)[] = [
  <S><circle cx="8" cy="8" r="7" stroke="#8f8f8f" strokeWidth="2" strokeDasharray="9 2" /><circle cx="8" cy="8" r="4.500" fill="#a0a0a0" /></S>,
  null,
  <S><path d="M1 2.500h14" stroke="#e23b30" strokeWidth="2" /><path d="M1 6h14" stroke="#f08c28" strokeWidth="2" /><path d="M1 9.500h14" stroke="#e8d020" strokeWidth="2" /><path d="M1 13h14" stroke="#48a848" strokeWidth="2" /></S>,
  null,
  <S><path d="M3 1q4-2 8 0v12q-4 2-8 0z" fill="#f0e020" stroke="#555" /><path d="M4 4h6M4 7h6" stroke="#888800" /><path d="M5 9h6v4H5zM8 11h6v4H8z" fill="#ccc" stroke="#444" /></S>,
  <S><path d="M8 2v12M2 8h12" stroke="#1560c0" strokeWidth="4" /></S>,
  null,
  <S><path d="M3 4h9v11H3z" stroke="#333" fill="#eef" /><path d="M0 1l4 3M6 6h4M8 6v7M6 13h4" stroke="#1a2f9c" strokeWidth="1.500" /><path d="M14.500 3v3M14.500 8v2M12.500 11l2 3 2-3" stroke="#e02020" /></S>,
  <S><path d="M2.500 1.500h11v13h-11z" fill="#f2f8ff" stroke="#3a7cc8" /><path d="M7 5h4v5H6M8 7.500L5.500 10 8 12.500" stroke="#123c9c" strokeWidth="1.500" /></S>,
  <S><path d="M1 5c1-4 6-5 9-4l5 2v4l-4-2v2H6L5 5z" fill="#b0b0b0" stroke="#666" /><path d="M6.500 7h3v4h-3z" fill="#888" /><path d="M6 11h4v5H6z" fill="#1560c0" /></S>,
  null,
  <S><path d="M0 2h15v11H0z" fill="#8a8a8a" stroke="#555" /><circle cx="7" cy="7" r="4" fill="#7ab8ec" stroke="#444" /><path d="M7 15l7-9 2 2-7 7z" fill="#f5a623" stroke="#9a5a10" /></S>,
  null,
  <S><path d="M1 2h9v12H1z" fill="#b8d8f4" stroke="#3a7cc8" /><path d="M6 1L2 3v12l4-1z" fill="#6aa8e0" stroke="#2a64a8" /><path d="M16 6h-4V4L8 7.500l4 3.500V9h4z" fill="#1b78d0" /></S>,
];

/* ---------- progress dialog ---------- */
const Progress = styled.section`
  position: absolute;
  left: 533px;
  top: 300px;
  width: 450px;
  height: 263px;
  display: flex;
  flex-direction: column;
  background: #f0f0f0;
  border: 1px solid #5c5c5c;
  box-shadow: 2px 4px 14px rgba(0, 0, 0, 0.5);
  font: 11px/13px "Liberation Sans", sans-serif;
`;
const ProgressTitle = styled.div`
  height: 25px;
  padding: 0 8px 2px 3px;
  display: flex;
  align-items: center;
  background: #fff;
  font: 12px/22px ${UI};
`;
const ProgressBody = styled.div`
  flex: 1;
  padding: 6px 8px 8px;
  display: flex;
  flex-direction: column;
`;
const Blocks = styled.div`
  height: 22px;
  padding: 1px;
  display: flex;
  gap: 1px;
  border: 1px solid #bcbcbc;
  background: #fff;
`;
const Block = styled.span<{ $hot?: boolean }>`
  flex: 1;
  background: ${(p) => (p.$hot ? "#d150ff" : "#74c020")};
  border: 1px solid ${(p) => (p.$hot ? "#b848e8" : "#66ac1e")};
`;
const Actions = styled.div`
  margin-top: 5px;
  display: flex;
  gap: 9px;
`;
const RunText = styled.span`
  flex: 1;
  padding-top: 8px;
`;
const ActionButton = styled.button<{ $focus?: boolean }>`
  width: 39px;
  height: 23px;
  padding: 0;
  border: ${(p) => (p.$focus ? "2px solid #0078d7" : "1px solid #adadad")};
  background: #e1e1e1;
  ${(p) => p.$focus && "outline: 1px dotted #000; outline-offset: -3px;"}
`;
const IdleBar = styled.div`
  height: 17px;
  margin: 8px 0 25px;
  border: 1px solid #bcbcbc;
  background: #e6e6e6;
`;
const LogBox = styled.div`
  flex: 1;
  display: grid;
  grid-template-columns: 1fr 17px;
  grid-template-rows: 1fr 17px;
  margin-bottom: 1px;
  border: 1px solid #a0a0a0;
  background: #fff;
`;
const LogText = styled.textarea`
  display: block;
  width: 100%;
  height: 100%;
  padding: 2px 1px;
  border: 0;
  resize: none;
  overflow: hidden;
  outline: 0;
  background: #fff;
`;
const log = "2024-10-11 11:16:05 end READ_DFM_Final_Rule\n2024-10-11 11:16:05 begin Rule Parts\nSubcategory Index:-1\nPart Count:25\n2024-10-11 11:16:06 end Rule Parts\nAnalysis rule start:2024-10-11 11:16:06";

const Doc = ({ on }: { on?: boolean }) => (
  <svg width="12" height="14" viewBox="0 0 12 14" fill="none" stroke="#4a90cc">
    <path d="M.5.500h8l3 3v10H.5z" fill={on ? "#cfe4f8" : "#fff"} />
    <path d="M8.500.500v3h3" />
    <path d={on ? "M2 3.500h6M2 5.500h8M2 7.500h8M2 9.500h8M2 11.500h8" : "M2 5.500h8M2 8.500h8M2 11.500h8"} stroke={on ? "#2a78c8" : "#c8dcec"} strokeDasharray={on ? "1 1" : undefined} />
  </svg>
);

export default function App() {
  return (
    <App_>
      <Global />
      <Defs />
      <TitleBar>
        <TitleLogo><Logo size={12} /></TitleLogo>
        {"VayoPro-DFM Expert : E44002A0 20241011   --F:\\Data"}
        <WinButtons $gap={32} $end={9}>
          <WinButton aria-label="最小化"><MinIcon /></WinButton>
          <WinButton aria-label="还原"><RestoreIcon /></WinButton>
          <WinButton aria-label="关闭"><CloseIcon /></WinButton>
        </WinButtons>
      </TitleBar>
      <MenuBar>
        {menus.map(([name, key]) => <MenuItem key={key}>{name}(<u>{key}</u>)</MenuItem>)}
      </MenuBar>
      <ToolBar role="toolbar">
        {toolItems.map((it, i) => {
          if (it === "|") return <ToolSep key={i} />;
          const on = it.endsWith("*");
          const name = it.replace("*", "");
          return name === "v"
            ? <ToolButton key={i} $on={on} $narrow aria-label="更多"><Caret /></ToolButton>
            : <ToolButton key={i} $on={on} aria-label={name}>{icons[name]}</ToolButton>;
        })}
      </ToolBar>

      <Main>
        <SideBar>
          <SideFrame>
            <Panel>
              <Head>信息</Head>
              <Info>{info.map((l) => <InfoLine key={l}><T>{l}</T></InfoLine>)}</Info>
            </Panel>
            <Panel>
              <Head>预览窗</Head>
              <Preview>
                <svg width="189" height="165" viewBox="0 0 189 165" fill="none" shapeRendering="crispEdges">
                  <path d="M0 15L15 0M163 0Q178 12 188 29M188 148L176 165M0 161l2 4" stroke="#f00" />
                  <path d="M40 20h109M137 12l12 8-12 7M40 145h109M137 138l12 7-12 7" stroke="#00f" strokeWidth="2" />
                </svg>
              </Preview>
            </Panel>
            <Panel $grow>
              <Head>层列表</Head>
              <Layers>
                {layers.map(([vis, c, a, b, name, tone], i) => (
                  <LayerRow key={i}>
                    <VisBox type="checkbox" id={`layer${i}`} defaultChecked={!!vis} />
                    <LayerSwatch $on={tone === "sel"}>
                      <Bar $c={c} />
                      <Dot $c={c} />
                      {tone === "sel" && (
                        <PenBox><svg width="10" height="10" viewBox="0 0 10 10"><path d="M0 9l1-4 5-5 3 3-5 5z" fill="#e8d040" stroke="#000" /></svg></PenBox>
                      )}
                    </LayerSwatch>
                    <LayerText htmlFor={`layer${i}`} $tone={tone}>
                      <span><T>{a}</T></span><span><T>{b}</T></span><span>{name}</span>
                    </LayerText>
                  </LayerRow>
                ))}
              </Layers>
            </Panel>
          </SideFrame>
          <Tabs>
            <Tab>Base</Tab>
            <Tab $on>Data</Tab>
          </Tabs>
        </SideBar>

        <Canvas>
          <Board />

          <Palette>
            <PaletteHead>DFM操作流程<PaletteClose aria-label="关闭">x</PaletteClose></PaletteHead>
            <Steps>
              {steps.map(([label, state], i) => (
                <Step key={label} $state={state} disabled={state === "off"}>
                  <StepMark>
                    {i < 6 && <svg width="14" height="14" viewBox="0 0 14 14"><path d="M0 7l3-1 2 3 7-8 2 1-8 11H5z" fill={i ? "#0a9a1c" : "#8c8c8c"} /></svg>}
                  </StepMark>
                  <span><T>{label}</T></span>
                </Step>
              ))}
            </Steps>
          </Palette>

          <Dialog>
            <DialogTitle>
              <Logo />
              {"DFM分析  --  localhost\\SQLEXPRESS:VayoDFMRuleLib"}
              <WinButtons $gap={32}>
                <WinButton aria-label="最小化"><MinIcon /></WinButton>
                <WinButton aria-label="最大化"><MaxIcon /></WinButton>
                <WinButton aria-label="关闭"><CloseIcon /></WinButton>
              </WinButtons>
            </DialogTitle>
            <DialogTools role="toolbar">
              {smallIcons.map((ic, i) => (ic ? <SmallButton key={i} aria-label={`工具${i}`}>{ic}</SmallButton> : <SmallSep key={i} />))}
            </DialogTools>
            <DialogBody>
              <LeftCol>
                <GroupRow>
                  <GroupLabel htmlFor="group"><T>规则组:</T></GroupLabel>
                  <Combo>
                    <ComboSelect id="group"><option>XJF</option></ComboSelect>
                    <ComboArrow><Caret /></ComboArrow>
                  </Combo>
                </GroupRow>
                <Scope>
                  <Legend><T>分析范围</T></Legend>
                  {["PCB外框", "PCB边框", "全部"].map((l, i) => (
                    <Option key={l}><Radio type="radio" name="scope" defaultChecked={i === 1} /><span><T>{l}</T></span></Option>
                  ))}
                </Scope>
                <Band $left><T>规则类</T></Band>
                <CheckRow>
                  {["裸板分析", "组装分析", "测试分析"].map((l) => (
                    <Option key={l}><Check type="checkbox" defaultChecked /><span><T>{l}</T></span></Option>
                  ))}
                </CheckRow>
                <ClassGrid $row={17} $head={24} $split={236}>
                  <Table $row={17} $head={24}>
                    <colgroup><col width="237" /><col /></colgroup>
                    <thead><tr><th><Pad $l={5}><T>规则类</T></Pad></th><th><Pad $l={5}><T>分析...</T></Pad></th></tr></thead>
                    <tbody>
                      {classes.map((c, i) => (
                        <tr key={c}>
                          <td>
                            <ClassCell>
                              <Check type="checkbox" id={`class${i}`} defaultChecked />
                              <ClassName htmlFor={`class${i}`} $on={i === 0}>{c}</ClassName>
                            </ClassCell>
                          </td>
                          <TintCell $on={i === 0} />
                        </tr>
                      ))}
                    </tbody>
                  </Table>
                </ClassGrid>
              </LeftCol>
              <RightCol>
                <Band><T>检查规则 — mm</T></Band>
                <Lists>
                  <RuleBox $row={17} $head={24} $split={224}>
                    <Clip>
                      <Table $row={17} $head={24}>
                        <colgroup><col width="24" /><col width="201" /><col /></colgroup>
                        <thead><tr><th /><th><Pad $l={5}><T>规则名</T></Pad></th><th><Pad $l={5}><T>规则描述</T></Pad></th></tr></thead>
                        <tbody>
                          {rules.map(([n, d], i) => (
                            <Row key={n} $on={i === 0}>
                              <td><Center><Doc on={i === 0} /></Center></td>
                              <td>
                                <RuleCell>
                                  <Check $blue type="checkbox" id={`rule${i}`} defaultChecked />
                                  <label htmlFor={`rule${i}`}>{n}</label>
                                </RuleCell>
                              </td>
                              <td><Pad $l={5}><T>{d}</T></Pad></td>
                            </Row>
                          ))}
                        </tbody>
                      </Table>
                    </Clip>
                    <VScroll><Arrow d="up" /><Thumb $h={72} /><Grow /><Arrow d="down" /></VScroll>
                    <HScroll><Arrow d="left" /><Grow /><Arrow d="right" /></HScroll>
                    <HScroll />
                  </RuleBox>
                  <AlgBox $row={16} $head={25} $split={161}>
                    <Table $row={16} $head={25}>
                      <colgroup><col width="162" /><col /></colgroup>
                      <thead><tr><th><Pad $l={6}><T>算法列表</T></Pad></th><th><Pad $l={4}><T>状态</T></Pad></th></tr></thead>
                      <tbody>
                        {algs.map((a) => (
                          <tr key={a}><td><Pad $l={6}>{a}</Pad></td><td><Pad $l={4}>True</Pad></td></tr>
                        ))}
                      </tbody>
                    </Table>
                  </AlgBox>
                </Lists>
                <Band />
                <RuleText><T>{ruleText}</T></RuleText>
              </RightCol>
            </DialogBody>
          </Dialog>

          <Progress>
            <ProgressTitle>
              Analysis Rule Progress -- E44002A0 20241011.vayo
              <WinButtons $gap={0}><WinButton aria-label="关闭"><CloseIcon /></WinButton></WinButtons>
            </ProgressTitle>
            <ProgressBody>
              <Blocks role="progressbar" aria-label="规则进度">
                {Array.from({ length: 43 }, (_, i) => <Block key={i} $hot={i === 1} />)}
              </Blocks>
              <Actions>
                <RunText>Run Rule:Ass_ComponentLayout</RunText>
                <ActionButton $focus>Jump</ActionButton>
                <ActionButton>Next</ActionButton>
                <ActionButton>Stop</ActionButton>
              </Actions>
              <IdleBar />
              <LogBox>
                <LogText aria-label="日志" readOnly defaultValue={log} />
                <VScroll><Arrow d="up" /><Grow /><Thumb $h={17} /><Arrow d="down" /></VScroll>
                <HScroll><Arrow d="left" /><Thumb $w={228} $dark /><Grow /><Arrow d="right" /></HScroll>
                <span />
              </LogBox>
            </ProgressBody>
          </Progress>
        </Canvas>
      </Main>
      <StatusBar>
        <StatusCell $w={155} /><StatusCell $w={150} /><StatusCell /><StatusCell $w={398} />
      </StatusBar>
    </App_>
  );
}
